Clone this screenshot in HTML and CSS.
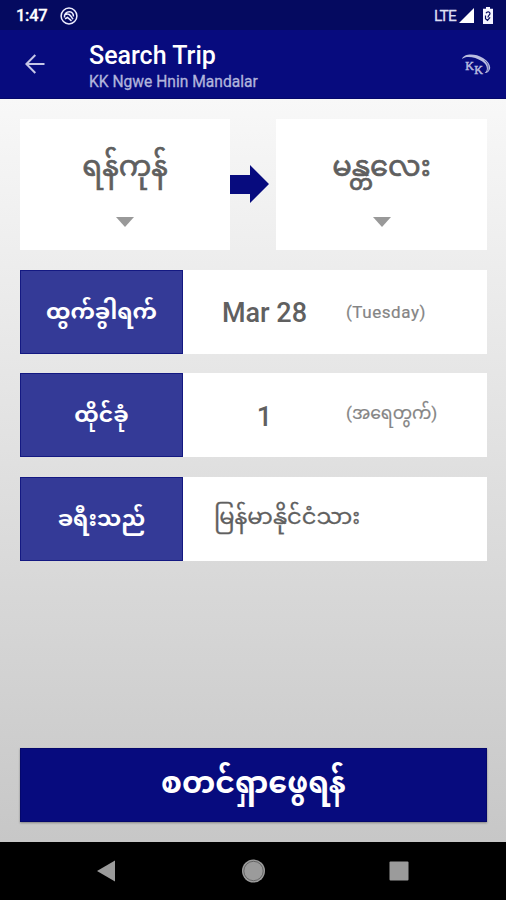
FILE: index.html
```html
<!DOCTYPE html>
<html lang="my">
<head>
<meta charset="utf-8">
<title>Search Trip</title>
<link rel="stylesheet" href="styles.css">
</head>
<body>
<div class="statusbar">
  <span class="clock">1:47</span>
  <svg class="notice" width="18" height="18" viewBox="0 0 18 18" fill="none" stroke="#eef" stroke-width="1.5"><circle cx="9" cy="9" r="7.900"/><path d="M4.500 10.500C4 7 6.500 4.600 9.500 4.700c2.500.1 4.200 2.300 3.900 4.800M5.200 7.500c2.500-1 4.400-.3 5.500 1.500s1.500 2.500 2.500 3M5 11.800l2.500-1.300 4 3.300"/></svg>
  <span class="lte">LTE</span>
  <svg class="signal" width="15" height="15" viewBox="0 0 15 15"><path d="M15 0v15H0z" fill="#fff"/></svg>
  <svg class="battery" width="10" height="17" viewBox="0 0 10 17"><path d="M3 0h4v1.800h3V17H0V1.800h3z" fill="#f4f4ff"/><path d="M3 6.200c1-2 4-1.800 4 .4 0 1.500-2 1.700-2 3.800M2.500 8.500v3.300l2 1.700 2.600-3.200" fill="none" stroke="#050a60" stroke-width="1.200"/></svg>
</div>
<header class="appbar">
  <svg class="back" width="20" height="20" viewBox="0 0 20 20" fill="none" stroke="#c5c6e6" stroke-width="2"><path d="M19.500 10H2M10.300 1L1.400 10l8.900 9"/></svg>
  <div class="titles">
    <h1 class="title">Search Trip</h1>
    <p class="subtitle">KK Ngwe Hnin Mandalar</p>
  </div>
  <svg class="logo" width="29" height="22" viewBox="0 0 29 22"><path d="M0 5C2-.5 13-.8 21 4c7 4.300 9 10 5.500 13.500-1 1-2.300 1.500-3.800 1.600 3.500-3 3-8-2.700-11.800C13 2.700 4 1.500 0 5z" fill="#b9bce0"/><path d="M22.500 6.500c4 3 4.700 7.500 3 10.800" fill="none" stroke="#070b7e" stroke-width=".5"/><text class="logo-k" x="3.200" y="15.500">K</text><text class="logo-k" x="12.200" y="19.500">K</text></svg>
</header>
<main class="content">
  <section class="route">
    <div class="place"><span class="city">ရန်ကုန်</span><i class="caret"></i></div>
    <svg class="arrow" width="46" height="40" viewBox="0 0 46 40"><path d="M0 11h20V1l19 19-19 19V30H0z" fill="#070b7e"/></svg>
    <div class="place"><span class="city">မန္တလေး</span><i class="caret"></i></div>
  </section>
  <section class="row">
    <div class="label">ထွက်ခွါရက်</div>
    <div class="value">Mar 28</div>
    <div class="note latin">(Tuesday)</div>
  </section>
  <section class="row">
    <div class="label">ထိုင်ခုံ</div>
    <div class="value">1</div>
    <div class="note">(အရေတွက်)</div>
  </section>
  <section class="row">
    <div class="label">ခရီးသည်</div>
    <div class="nation">မြန်မာနိုင်ငံသား</div>
  </section>
  <button class="search">စတင်ရှာဖွေရန်</button>
</main>
<nav class="navbar">
  <svg width="506" height="58" viewBox="0 0 506 58" fill="#9b9b9b"><path d="M97 29l18-10.500v21z"/><circle cx="253.500" cy="29" r="11.500"/><circle cx="253.500" cy="29" r="9.700" fill="none" stroke="#555" stroke-width=".8"/><rect x="389.500" y="19.500" width="19" height="19" rx="1"/></svg>
</nav>
</body>
</html>
```
FILE: styles.css
```css
* { box-sizing: border-box; }
body {
  margin: 0;
  width: 506px;
  height: 900px;
  display: flex;
  flex-direction: column;
  overflow: hidden;
  background: #000;
  font-family: Roboto, "Noto Sans Myanmar", "Noto Sans", sans-serif;
}
svg { display: block; flex: none; }
.statusbar {
  height: 30px;
  flex: none;
  display: flex;
  align-items: center;
  padding: 1px 13px 0 16px;
  background: #050a60;
  color: #fff;
}
.clock { width: 44px; font-size: 16.5px; font-weight: 500; letter-spacing: -0.3px; white-space: nowrap; -webkit-text-stroke: 0.3px; }
.lte { margin-left: auto; font-size: 15.5px; letter-spacing: -0.8px; color: #dddff2; -webkit-text-stroke: 0.3px; }
.signal { margin-left: 3px; }
.battery { margin-left: 9px; }
.appbar {
  height: 69px;
  flex: none;
  display: flex;
  padding: 0 15px 0 25px;
  background: #070b7e;
  border-bottom: 1px solid #05086a;
}
.back { margin-top: 24px; }
.titles { margin-left: 44px; flex: 1; }
.title { margin: 11px 0 0; font-size: 25px; line-height: 30px; font-weight: 500; color: #fff; }
.subtitle { margin: 1px 0 0; font-size: 15.6px; line-height: 20px; color: #b1b4dc; -webkit-text-stroke: 0.3px; }
.logo { margin-top: 24px; }
.logo-k { font: 12px "Liberation Serif", serif; fill: #b9bce0; stroke: #b9bce0; stroke-width: 0.5px; }
.content {
  height: 743px;
  flex: none;
  padding: 20px 19px 20px 20px;
  display: flex;
  flex-direction: column;
  gap: 19.4px;
  background: linear-gradient(#f8f8f8, #c7c7c7);
}
.route { display: flex; height: 131px; margin-bottom: 0.6px; flex: none; }
.place {
  flex: none;
  width: 210px;
  background: #fff;
  display: flex;
  flex-direction: column;
  align-items: center;
}
.place:last-child { width: 211px; }
.arrow { margin-top: 45px; }
.city { height: 98px; line-height: 95px; font-size: 29px; color: #5f5f5f; -webkit-text-stroke: 0.7px; }
.caret { border: 9px solid transparent; border-top: 10px solid #999; border-bottom: 0; }
.row { display: flex; height: 84px; flex: none; align-items: center; background: #fff; }
.label {
  width: 163px;
  height: 84px;
  line-height: 81px;
  text-align: center;
  background: #343a97;
  border: 1px solid #141982;
  color: #fff;
  font-size: 22px;
  font-weight: 700;
}
.value { width: 163px; text-align: center; font-size: 27px; font-weight: 500; color: #606060; padding-top: 3px; }
.note { font-size: 17.2px; color: #858585; -webkit-text-stroke: 0.2px; }
.latin { font-size: 17px; letter-spacing: 0.55px; padding-top: 1px; }
.nation { margin-left: 31px; font-size: 22.6px; color: #606060; -webkit-text-stroke: 0.3px; }
.search {
  margin-top: auto;
  height: 74px;
  flex: none;
  padding: 0 0 4px;
  border: 1px solid #04076c;
  background: #070b7e;
  box-shadow: 0 1px 2px rgba(0, 0, 0, 0.35);
  color: #fff;
  font: 700 30px/68px Roboto, "Noto Sans Myanmar", sans-serif;
}
.navbar { height: 58px; background: #000; }
```
